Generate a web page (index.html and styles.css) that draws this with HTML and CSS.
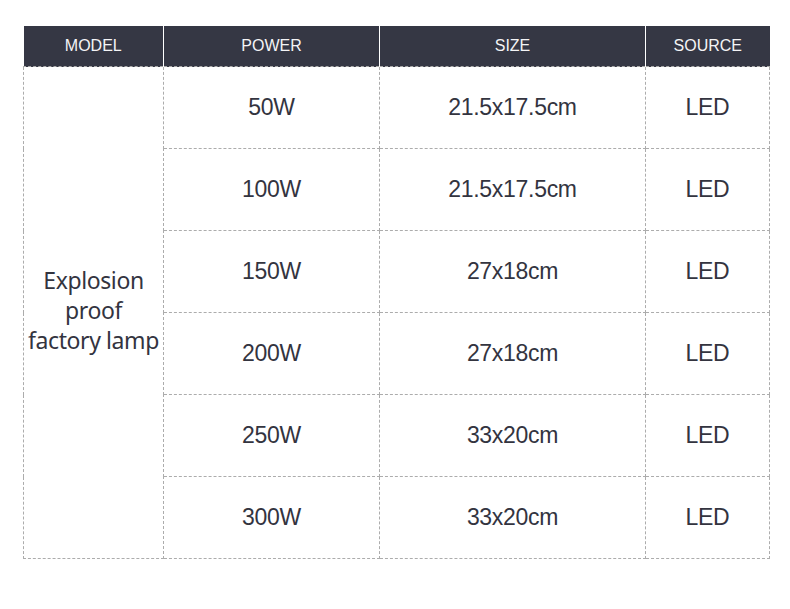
FILE: index.html
```html
<!DOCTYPE html>
<html lang="en">
<head>
<meta charset="utf-8">
<title>Explosion proof factory lamp</title>
<link rel="stylesheet" href="styles.css">
</head>
<body>
<table class="spec">
  <colgroup>
    <col class="c-model">
    <col class="c-power">
    <col class="c-size">
    <col class="c-source">
  </colgroup>
  <thead>
    <tr>
      <th>MODEL</th>
      <th>POWER</th>
      <th>SIZE</th>
      <th>SOURCE</th>
    </tr>
  </thead>
  <tbody>
    <tr>
      <td class="model" rowspan="6">Explosion<br>proof<br>factory lamp</td>
      <td>50W</td>
      <td>21.5x17.5cm</td>
      <td>LED</td>
    </tr>
    <tr><td>100W</td><td>21.5x17.5cm</td><td>LED</td></tr>
    <tr><td>150W</td><td>27x18cm</td><td>LED</td></tr>
    <tr><td>200W</td><td>27x18cm</td><td>LED</td></tr>
    <tr><td>250W</td><td>33x20cm</td><td>LED</td></tr>
    <tr><td>300W</td><td>33x20cm</td><td>LED</td></tr>
  </tbody>
</table>
</body>
</html>
```

FILE: styles.css
```css
html, body {
  margin: 0;
  background: #ffffff;
}

body {
  padding: 26px 21px 0 23px;
  font-family: "Liberation Sans", Arial, sans-serif;
  color: #33343f;
}

.spec {
  border-collapse: collapse;
  table-layout: fixed;
  width: 746px;
}

.c-model { width: 140px; }
.c-power { width: 216px; }
.c-size { width: 266px; }
.c-source { width: 124px; }

.spec th {
  height: 40px;
  padding: 0;
  background: #353744;
  color: #f4f4f6;
  font-size: 16px;
  font-weight: normal;
  text-align: center;
  vertical-align: middle;
  border-left: 1px solid #ffffff;
  border-bottom: 1px dashed #acacac;
}

.spec th:first-child {
  border-left: none;
}

.spec td {
  height: 82px;
  padding: 0 0 1px;
  box-sizing: border-box;
  font-size: 23px;
  letter-spacing: -0.3px;
  text-align: center;
  vertical-align: middle;
  border: 1px dashed #acacac;
}

.spec td.model {
  padding: 0 0 6px;
  font-family: "Noto Sans", "Liberation Sans", sans-serif;
  font-size: 23px;
  letter-spacing: -0.4px;
  line-height: 30px;
}
```
